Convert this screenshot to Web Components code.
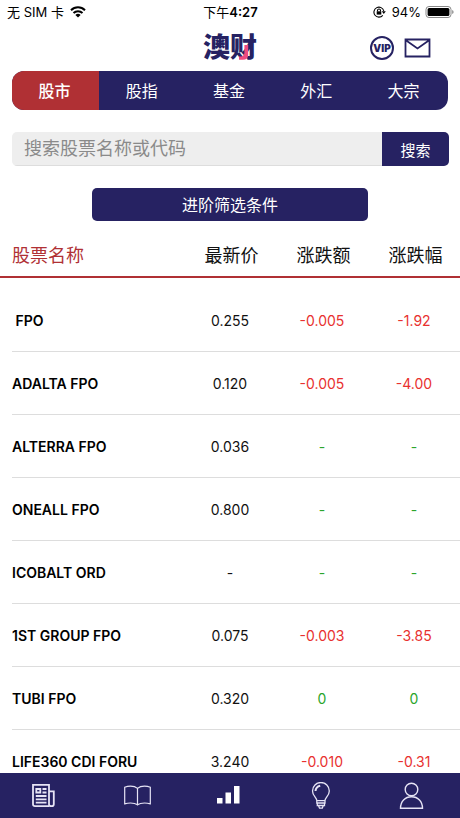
<!DOCTYPE html>
<html lang="zh-CN">
<head>
<meta charset="utf-8">
<meta name="viewport" content="width=device-width, initial-scale=1">
<title>澳财</title>
<style>
  body {
    margin: 0;
    background: #fff;
    color: #111;
    font-family: Inter, "Noto Sans CJK SC", sans-serif;
    font-size: 14px;
    --navy: #262262;
    --red: #b03034;
  }
</style>
</head>
<body>
<market-app>
  <status-bar slot="top" carrier="无 SIM 卡" period="下午" time="4:27" battery="94%"></status-bar>
  <app-header slot="top"></app-header>
  <market-tabs slot="top">
    <button type="button" role="tab" aria-selected="true">股市</button>
    <button type="button" role="tab" aria-selected="false">股指</button>
    <button type="button" role="tab" aria-selected="false">基金</button>
    <button type="button" role="tab" aria-selected="false">外汇</button>
    <button type="button" role="tab" aria-selected="false">大宗</button>
  </market-tabs>
  <stock-search slot="top" placeholder="搜索股票名称或代码">搜索</stock-search>
  <filter-button slot="top">进阶筛选条件</filter-button>
  <quote-table></quote-table>
  <bottom-nav slot="bottom"></bottom-nav>
</market-app>

<script>
class BaseElement extends HTMLElement {
  constructor() {
    super();
    this.attachShadow({mode: "open"});
  }
  connectedCallback() {
    const template = document.createElement("template");
    template.innerHTML = `
<style>
  * {
    box-sizing: border-box;
  }
  button, input {
    margin: 0;
    border: 0;
    font-family: inherit;
  }
  svg {
    display: block;
  }
  ${this.style()}
</style>
${this.template()}`;
    this.shadowRoot.appendChild(template.content.cloneNode(true));
  }
}

class MarketApp extends BaseElement {
  style() {
    return `
  :host {
    display: flex;
    flex-direction: column;
    height: 100vh;
  }
  main {
    flex: 1;
    min-height: 0;
    overflow: hidden;
  }
    `;
  }
  template() {
    return `
<slot name="top"></slot>
<main><slot></slot></main>
<slot name="bottom"></slot>
    `;
  }
}

class StatusBar extends BaseElement {
  style() {
    return `
  :host {
    display: grid;
    grid-template-columns: 1fr auto 1fr;
    align-items: center;
    height: 24px;
    padding: 0 6px 0 7px;
    font-size: 13px;
    line-height: 24px;
    color: #000;
  }
  div {
    display: flex;
    align-items: center;
    gap: 6px;
  }
  .time b {
    font-weight: 600;
  }
  .right {
    justify-content: flex-end;
  }
  .right .battery {
    margin-left: -2px;
  }
    `;
  }
  template() {
    return `
<div>
  <span>${this.getAttribute("carrier")}</span>
  <svg width="16" height="12" viewBox="0 0 16 12" fill="none" stroke="#000" stroke-width="2">
    <path d="M1 4.2a10 10 0 0 1 14 0M3.5 7a6.4 6.4 0 0 1 9 0"/>
    <path d="M8 11.6 5.4 9a3.7 3.7 0 0 1 5.2 0z" fill="#000" stroke="none"/>
  </svg>
</div>
<span class="time">${this.getAttribute("period")}<b>${this.getAttribute("time")}</b></span>
<div class="right">
  <svg width="13" height="12" viewBox="0 0 13 12" fill="none" stroke="#000" stroke-width="1.1">
    <path d="M9.8 9.3A5 5 0 1 1 10.8 5"/>
    <path d="M8.8 5.2h4l-2 2.8z" fill="#000" stroke="none"/>
    <path d="M4.5 5.6V4.5a1.5 1.5 0 0 1 3 0v1.1"/>
    <path d="M3.7 5.3h4.6v3.3H3.7z" fill="#000" stroke="none"/>
  </svg>
  <span>${this.getAttribute("battery")}</span>
  <svg class="battery" width="29" height="12" viewBox="0 0 29 12">
    <rect x="1" y=".5" width="25" height="11" rx="3" fill="none" stroke="#888"/>
    <rect x="2.6" y="2" width="21.8" height="8" rx="1.5"/>
    <path d="M27.2 4v4q1.4-.5 1.4-2t-1.4-2z" fill="#888"/>
  </svg>
</div>
    `;
  }
}

class AppHeader extends BaseElement {
  style() {
    return `
  :host {
    display: grid;
    grid-template-columns: 1fr auto 1fr;
    align-items: center;
    height: 47px;
    padding: 0 29px;
  }
  h1 {
    grid-column: 2;
    position: relative;
    margin: 0;
    font-size: 27px;
    line-height: 46px;
    font-weight: 900;
    color: var(--navy);
  }
  /* pink stroke laid over the second character */
  h1 svg {
    position: absolute;
    right: 8px;
    bottom: 10px;
  }
  nav {
    display: flex;
    justify-content: flex-end;
    align-items: center;
    gap: 10px;
  }
  nav button {
    padding: 0;
    background: none;
    color: var(--navy);
  }
  .vip {
    width: 24px;
    height: 24px;
    border: 2px solid var(--navy);
    border-radius: 50%;
    display: flex;
    align-items: center;
    justify-content: center;
    font-size: 10px;
    font-weight: 900;
  }
    `;
  }
  template() {
    return `
<h1>澳财<svg width="11" height="17" viewBox="0 0 11 17"><path d="M6.4 1h3.8v10.6Q9.6 15.8 5 15.8H1v-3.2h2.2q3.2-.5 3.2-4z" fill="#ed4c80"/></svg></h1>
<nav>
  <button type="button" class="vip">VIP</button>
  <button type="button" aria-label="消息">
    <svg width="27" height="20" viewBox="0 0 27 20" fill="none" stroke="currentColor" stroke-width="1.8">
      <path d="M1.5 1.5h24v17h-24zM1.5 2l12 8.5 12-8.5"/>
    </svg>
  </button>
</nav>
    `;
  }
}

class MarketTabs extends BaseElement {
  style() {
    return `
  :host {
    display: block;
    margin: 0 12px;
  }
  .tabs {
    display: flex;
    height: 39px;
    border-radius: 12px;
    overflow: hidden;
    background: var(--navy);
  }
  ::slotted(button) {
    flex: 1;
    margin: 0;
    padding: 0 2px 2px 0;
    border: 0;
    background: none;
    color: #fff;
    font-family: inherit;
    font-size: 16px;
    font-weight: 400;
  }
  ::slotted(button[aria-selected="true"]) {
    background: var(--red);
    font-weight: 500;
  }
    `;
  }
  template() {
    return `<div class="tabs" role="tablist"><slot></slot></div>`;
  }
}

class StockSearch extends BaseElement {
  style() {
    return `
  :host {
    display: block;
    margin: 22px 11px 0 12px;
  }
  form {
    display: flex;
    height: 34px;
    border-radius: 5px;
    overflow: hidden;
  }
  input {
    flex: 1;
    min-width: 0;
    padding: 0 12px;
    background: #eee;
    border-bottom: 1px solid #ddd;
    font-size: 18px;
  }
  input::placeholder {
    color: #8a8a8a;
  }
  button {
    width: 67px;
    padding: 0;
    background: var(--navy);
    color: #fff;
    font-size: 15px;
  }
    `;
  }
  template() {
    const text = this.getAttribute("placeholder");
    return `
<form>
  <input type="text" placeholder="${text}" aria-label="${text}">
  <button type="button"><slot></slot></button>
</form>
    `;
  }
}

class FilterButton extends BaseElement {
  style() {
    return `
  :host {
    display: flex;
    justify-content: center;
    margin-top: 22px;
  }
  button {
    width: 60%;
    height: 33px;
    padding: 0 0 2px;
    border-radius: 5px;
    background: var(--navy);
    color: #fff;
    font-size: 16px;
  }
    `;
  }
  template() {
    return `<button type="button"><slot></slot></button>`;
  }
}

class QuoteTable extends BaseElement {
  rows() {
    const list = [
      ["&nbsp;FPO", "0.255", "-0.005", "-1.92"],
      ["ADALTA FPO", "0.120", "-0.005", "-4.00"],
      ["ALTERRA FPO", "0.036", "-", "-"],
      ["ONEALL FPO", "0.800", "-", "-"],
      ["ICOBALT ORD", "-", "-", "-"],
      ["1ST GROUP FPO", "0.075", "-0.003", "-3.85"],
      ["TUBI FPO", "0.320", "0", "0"],
      ["LIFE360 CDI FORU", "3.240", "-0.010", "-0.31"]
    ];
    return list.map(([name, price, change, percent]) => {
      const trend = parseFloat(change) < 0 ? "down" : "flat";
      return `
    <tr>
      <th scope="row">${name}</th>
      <td>${price}</td>
      <td class="${trend}">${change}</td>
      <td class="${trend}">${percent}</td>
    </tr>`;
    }).join("");
  }
  style() {
    return `
  :host {
    display: block;
  }
  table {
    width: 100%;
    table-layout: fixed;
    border-collapse: separate;
    border-spacing: 0;
  }
  th, td {
    width: 20%;
    padding: 0;
    text-align: center;
    white-space: nowrap;
  }
  th:first-child {
    width: 40%;
    padding-left: 12px;
    text-align: left;
  }
  thead th {
    height: 57px;
    padding: 14px 0 0 3px;
    border-bottom: 2px solid var(--red);
    font-size: 18px;
    line-height: 24px;
    font-weight: 400;
  }
  thead th:first-child {
    color: var(--red);
  }
  /* space between the header line and the first row */
  tbody::before {
    content: "";
    display: table-row;
    height: 11px;
  }
  tbody th, tbody td {
    height: 63px;
    border-bottom: 1px solid #ddd;
  }
  tbody th {
    border-bottom: 0;
    background: linear-gradient(#ddd, #ddd) 12px 100% / 100% 1px no-repeat;
    font-weight: 600;
    color: #000;
  }
  .down {
    color: #e8312f;
  }
  .flat {
    color: #2ba52b;
  }
    `;
  }
  template() {
    return `
<table>
  <thead>
    <tr>
      <th scope="col">股票名称</th>
      <th scope="col">最新价</th>
      <th scope="col">涨跌额</th>
      <th scope="col">涨跌幅</th>
    </tr>
  </thead>
  <tbody>${this.rows()}
  </tbody>
</table>
    `;
  }
}

class BottomNav extends BaseElement {
  style() {
    return `
  :host {
    display: block;
    background: var(--navy);
  }
  nav {
    display: flex;
    height: 45px;
    padding-right: 2px;
  }
  a {
    flex: 1;
    display: flex;
    align-items: center;
    justify-content: center;
    color: #e6e4f5;
  }
  a[aria-current] {
    color: #fff;
  }
  svg {
    fill: none;
    stroke: currentColor;
  }
    `;
  }
  template() {
    return `
<nav>
  <a href="#news" aria-label="新闻">
    <svg width="28" height="28" viewBox="0 0 28 28" stroke-width="1.8">
      <path d="M17 24.2H3q-2 0-2-2V2.8h16v19.4q0 2 2.4 2t2.4-2V9.4H17"/>
      <path d="M4.3 7h4v3.5h-4zM10.500 7h4M10.500 10.500h4M3.800 14h10.700M3.800 17.300h10.700M3.800 20.600h10.700"/>
    </svg>
  </a>
  <a href="#learn" aria-label="学习">
    <svg width="28" height="28" viewBox="0 0 28 28" stroke-width="1.2">
      <path d="M14.5 6.4Q12 4.2 7.5 4.2 4.5 4.2 1.7 5.2v16.6q2.800-.8 5.800-.8 4.500 0 7 1.800 2.500-1.800 7-1.800 3 0 5.800.8V5.200q-2.800-1-5.800-1-4.500 0-7 2.200zM14.500 6.400v17"/>
    </svg>
  </a>
  <a href="#market" aria-label="行情" aria-current="page">
    <svg width="28" height="28" viewBox="0 0 28 28">
      <path d="M2 16h5.500v5.500H2zM10.500 10.500H16v11h-5.500zM19 4h5.500v17.500H19z" fill="currentColor" stroke="none"/>
    </svg>
  </a>
  <a href="#ideas" aria-label="观点">
    <svg width="28" height="28" viewBox="0 0 28 28" stroke-width="1.3">
      <path d="M9.800 18.600c0-3.200-4.300-4.800-4.300-9.700a8.400 8.400 0 0 1 16.800 0c0 4.900-4.300 6.500-4.300 9.700zM9.800 18.600v2.400H18v-2.400M10.300 21v2.500h7.200V21M11.500 23.500l1 2.700h2.800l1-2.700"/>
      <path d="M8.500 9q.3-4.200 4.700-5.300" stroke-width="2"/>
    </svg>
  </a>
  <a href="#me" aria-label="我的">
    <svg width="28" height="28" viewBox="0 0 28 28" stroke-width="1.4">
      <circle cx="13.500" cy="7.500" r="6.300"/>
      <path d="M2.500 26.300c0-7 4.500-11.500 11-11.500s11 4.500 11 11.500z"/>
    </svg>
  </a>
</nav>
    `;
  }
}

window.customElements.define("market-app", MarketApp);
window.customElements.define("status-bar", StatusBar);
window.customElements.define("app-header", AppHeader);
window.customElements.define("market-tabs", MarketTabs);
window.customElements.define("stock-search", StockSearch);
window.customElements.define("filter-button", FilterButton);
window.customElements.define("quote-table", QuoteTable);
window.customElements.define("bottom-nav", BottomNav);
</script>
</body>
</html>
